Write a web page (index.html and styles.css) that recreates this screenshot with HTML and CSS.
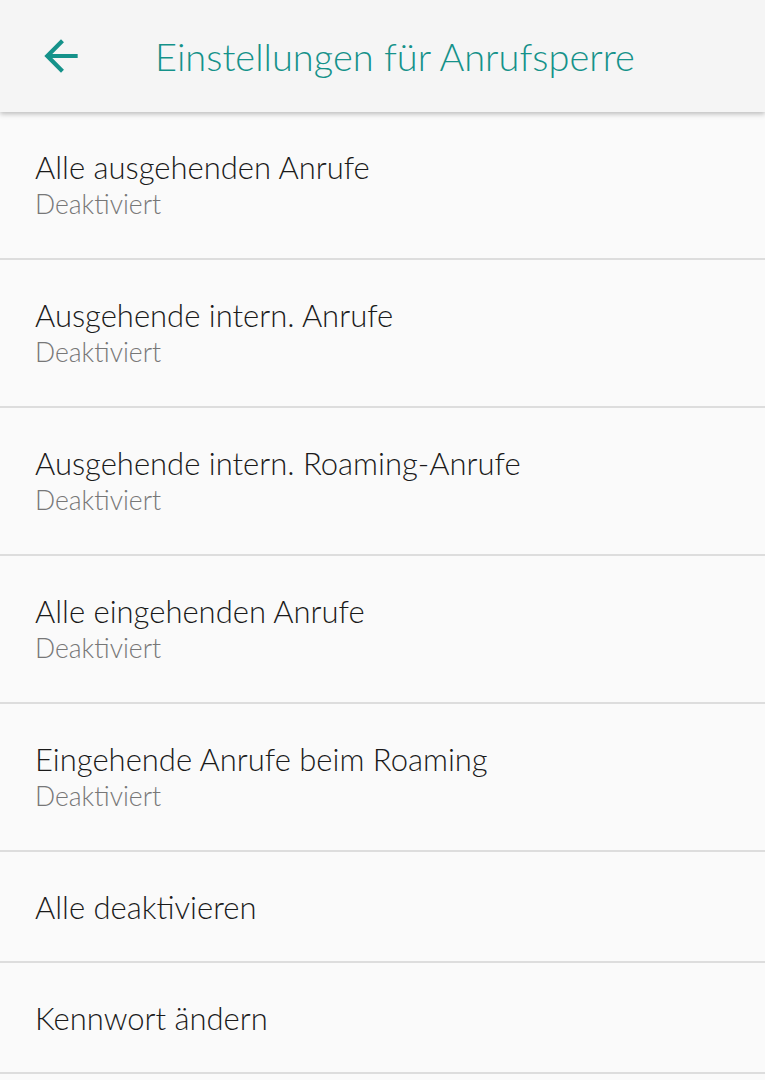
FILE: index.html
```html
<!DOCTYPE html>
<html lang="de">
<head>
<meta charset="utf-8">
<link rel="stylesheet" href="styles.css">
</head>
<body>
<header class="appbar">
  <div class="back">
    <svg width="50" height="50" viewBox="0 0 24 24"><path d="M20 11H7.83l5.59-5.59L12 4l-8 8 8 8 1.41-1.41L7.83 13H20v-2z" fill="#15928a"/></svg>
  </div>
  <h1 class="title">Einstellungen für Anrufsperre</h1>
</header>
<main class="list">
  <div class="row two"><div class="primary">Alle ausgehenden Anrufe</div><div class="secondary">Deaktiviert</div></div>
  <div class="row two"><div class="primary">Ausgehende intern. Anrufe</div><div class="secondary">Deaktiviert</div></div>
  <div class="row two"><div class="primary">Ausgehende intern. Roaming-Anrufe</div><div class="secondary">Deaktiviert</div></div>
  <div class="row two"><div class="primary">Alle eingehenden Anrufe</div><div class="secondary">Deaktiviert</div></div>
  <div class="row two"><div class="primary">Eingehende Anrufe beim Roaming</div><div class="secondary">Deaktiviert</div></div>
  <div class="row one"><div class="primary">Alle deaktivieren</div></div>
  <div class="row one"><div class="primary">Kennwort ändern</div></div>
</main>
</body>
</html>
```
FILE: styles.css
```css
html, body {
  margin: 0;
  padding: 0;
  background: #fafafa;
  font-family: "Lato", "Open Sans", sans-serif;
  font-weight: 300;
}
.appbar {
  position: relative;
  z-index: 2;
  height: 112px;
  background: #f5f5f5;
  box-shadow: 0 2px 5px rgba(0,0,0,0.25);
  display: flex;
  align-items: center;
}
.back {
  width: 50px;
  height: 50px;
  margin-left: 36px;
  margin-right: 69px;
  display: flex;
}
.title {
  margin: 0;
  font-weight: 300;
  font-size: 38px;
  color: #15928a;
}
.list {
  display: flex;
  flex-direction: column;
}
.row {
  display: flex;
  flex-direction: column;
  justify-content: center;
  padding-left: 35px;
  border-bottom: 2px solid #dddddd;
}
.row.two { height: 146px; }
.row.one { height: 109px; }
.primary {
  font-size: 31px;
  color: #1a1a1a;
  line-height: 38px;
}
.secondary {
  font-size: 26.5px;
  color: #777777;
  line-height: 36px;
}
```
